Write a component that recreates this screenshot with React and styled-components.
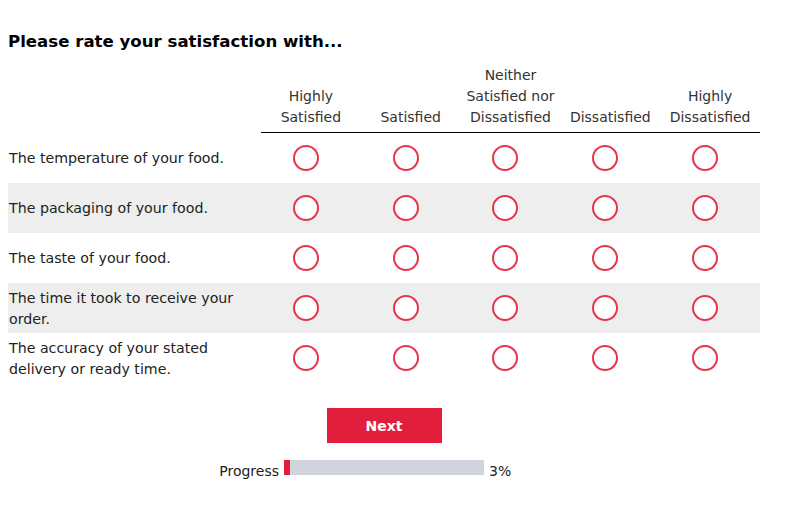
import styled, { createGlobalStyle } from "styled-components";

const GlobalStyle = createGlobalStyle`
    body {
        margin: 0;
        background: #fff;
        font-family: "DejaVu Sans", Verdana, sans-serif;
        color: #222;
    }
`;

const Survey = styled.main`
    width: 752px;
    padding: 30px 8px 0 8px;
`;

const Title = styled.h1`
    margin: 0 0 11px 0;
    font-size: 16.6px;
    font-weight: bold;
    color: #000;
    line-height: 24px;
`;

const Grid = styled.div`
    display: grid;
    grid-template-columns: 253px repeat(5, 1fr);
`;

const HeadCell = styled.div`
    grid-column: ${({ $col }) => $col};
    display: flex;
    align-items: flex-end;
    justify-content: center;
    text-align: center;
    font-size: 14px;
    line-height: 21px;
    color: #333;
    white-space: nowrap;
    padding-bottom: 4px;
    border-bottom: ${({ $empty }) => ($empty ? "none" : "1px solid #000")};
`;

const Row = styled.div`
    grid-column: 1 / -1;
    display: grid;
    grid-template-columns: subgrid;
    height: 50px;
    align-items: center;
    background: ${({ $shaded }) => ($shaded ? "#eeeeee" : "transparent")};
`;

const Label = styled.div`
    padding-left: 1px;
    padding-top: 1px;
    font-size: 14.2px;
    line-height: 21px;
    color: #222;
    white-space: nowrap;
`;

const RadioCell = styled.label`
    display: flex;
    justify-content: center;
    padding-right: 10px;
    cursor: pointer;
`;

const Radio = styled.span`
    width: 22px;
    height: 22px;
    border-radius: 50%;
    border: 2.5px solid #e8344a;
    background: #fff;
`;

const Actions = styled.div`
    display: flex;
    justify-content: center;
    padding-top: 25px;
`;

const NextButton = styled.button`
    width: 115px;
    height: 35px;
    border: none;
    background: #e31e3c;
    color: #fff;
    font-family: inherit;
    font-weight: bold;
    font-size: 14px;
    cursor: pointer;
`;

const ProgressRow = styled.div`
    display: grid;
    grid-template-columns: 1fr 200px 1fr;
    align-items: center;
    column-gap: 5px;
    margin-top: 11px;
    font-size: 14px;
    line-height: 20px;
    color: #222;
`;

const ProgressLabel = styled.span`
    justify-self: end;
    padding-top: 7px;
`;

const ProgressValue = styled.span`
    padding-top: 7px;
`;

const Track = styled.div`
    height: 15px;
    background: #d0d4de;
`;

const Fill = styled.div`
    height: 100%;
    background: #e31e3c;
`;

const scale = [
    ["Highly", "Satisfied"],
    ["Satisfied"],
    ["Neither", "Satisfied nor", "Dissatisfied"],
    ["Dissatisfied"],
    ["Highly", "Dissatisfied"],
];

const questions = [
    ["The temperature of your food."],
    ["The packaging of your food."],
    ["The taste of your food."],
    ["The time it took to receive your", "order."],
    ["The accuracy of your stated", "delivery or ready time."],
];

const App = () => {
    const progress = 3;

    return (
        <>
            <GlobalStyle />
            <Survey>
                <Title>Please rate your satisfaction with...</Title>
                <Grid>
                    <HeadCell $col={1} $empty />
                    {scale.map((lines, i) => (
                        <HeadCell key={i} $col={i + 2}>
                            <div>
                                {lines.map((l) => (
                                    <div key={l}>{l}</div>
                                ))}
                            </div>
                        </HeadCell>
                    ))}
                    {questions.map((q, r) => (
                        <Row key={r} $shaded={r % 2 === 1}>
                            <Label>
                                {q.map((l) => (
                                    <div key={l}>{l}</div>
                                ))}
                            </Label>
                            {scale.map((_, c) => (
                                <RadioCell key={c}>
                                    <Radio />
                                </RadioCell>
                            ))}
                        </Row>
                    ))}
                </Grid>
                <Actions>
                    <NextButton>Next</NextButton>
                </Actions>
                <ProgressRow>
                    <ProgressLabel>Progress</ProgressLabel>
                    <Track>
                        <Fill style={{ width: `${progress}%` }} />
                    </Track>
                    <ProgressValue>{progress}%</ProgressValue>
                </ProgressRow>
            </Survey>
        </>
    );
};

export default App;
